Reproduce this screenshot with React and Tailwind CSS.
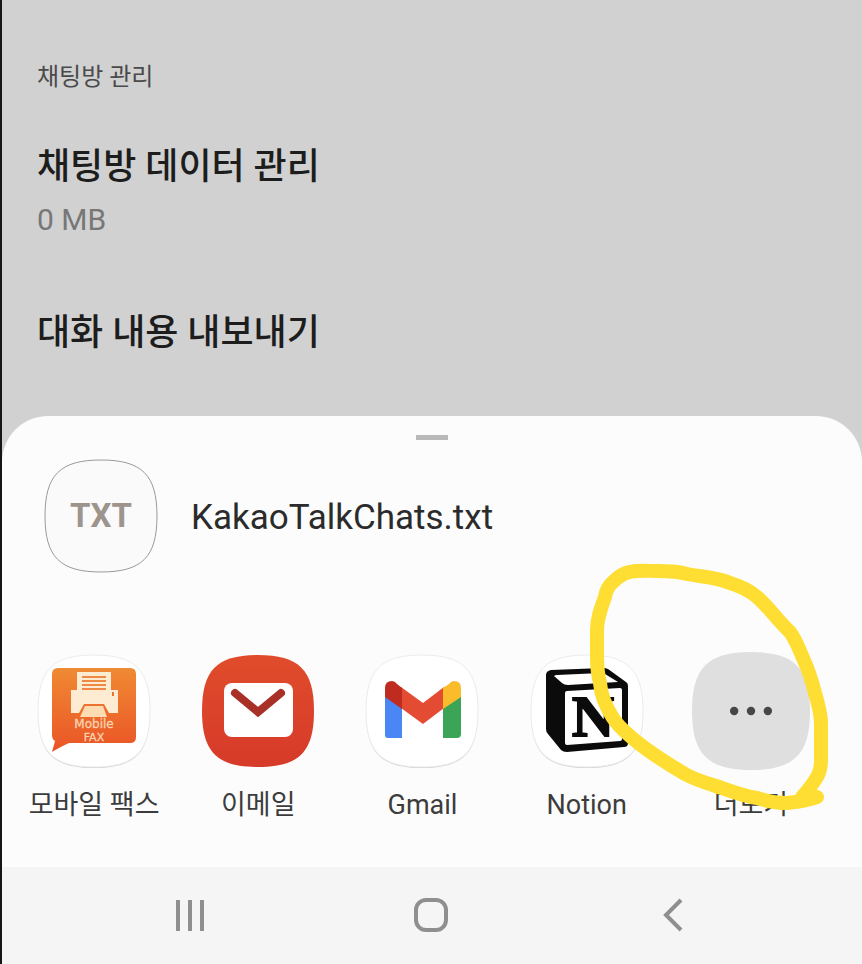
import React from "react";

const SQUIRCLE =
  "M56 0C15 0 0 15 0 56S15 112 56 112S112 97 112 56S97 0 56 0Z";

function Tile({ children }) {
  return (
    <svg viewBox="-2 -2 116 116" className="size-[116px]" aria-hidden="true">
      <path d={SQUIRCLE} fill="#d0d0d0" transform="translate(0 1)" />
      <path d={SQUIRCLE} fill="#fff" stroke="#ececec" strokeWidth="1" />
      {children}
    </svg>
  );
}

function FaxIcon() {
  return (
    <Tile>
      <defs>
        <linearGradient id="fax" x1="0" y1="0" x2="0" y2="1">
          <stop offset="0" stopColor="#f08a33" />
          <stop offset="1" stopColor="#ea5426" />
        </linearGradient>
      </defs>
      <path
        d="M20 13H92Q98 13 98 19V82Q98 88 92 88H31Q24 91 14 97L17 86Q14 84 14 81V19Q14 13 20 13Z"
        fill="url(#fax)"
      />
      <path d="M39 17H73V35H80V58H71L66 49H46L41 58H33V35H39Z" fill="#fdebd2" />
      <path d="M47 51H65L69 62H42Z" fill="#fddcb4" />
      <path d="M44 22H68M44 26H68M44 30H68M44 34H68" stroke="#ef8a45" strokeWidth="2" />
      <path d="M74 37H76V41H74Z" fill="#ec7030" />
      <g
        fill="#fbd3b0"
        stroke="#fbd3b0"
        strokeWidth="0.3"
        fontFamily="'DejaVu Sans', sans-serif"
        textAnchor="middle"
      >
        <text x="56" y="73" fontSize="12">Mobile</text>
        <text x="56" y="86" fontSize="11">FAX</text>
      </g>
    </Tile>
  );
}

function MailIcon() {
  return (
    <svg viewBox="-2 -2 116 116" className="size-[116px]" aria-hidden="true">
      <defs>
        <linearGradient id="mail" x1="0" y1="0" x2="0" y2="1">
          <stop offset="0" stopColor="#e04c2b" />
          <stop offset="1" stopColor="#d63a29" />
        </linearGradient>
      </defs>
      <path d={SQUIRCLE} fill="url(#mail)" />
      <rect x="22" y="28" width="69" height="54" rx="8" fill="#fff" />
      <path
        d="M33 38L56 57L79 38"
        fill="none"
        stroke="#a93026"
        strokeWidth="8"
        strokeLinecap="round"
      />
    </svg>
  );
}

function GmailIcon() {
  return (
    <Tile>
      <path d="M19 40L36 52V83H22Q19 83 19 80Z" fill="#4a86f4" />
      <path d="M95 40L77 52V83H91Q95 83 95 79Z" fill="#3ba457" />
      <path d="M35 32L57 48L78 32V53L57 69L35 53Z" fill="#e34b33" />
      <path d="M19 33Q19 26 26 26Q29 26 31 29L36 33V54L19 42Z" fill="#c02b20" />
      <path d="M95 33Q95 26 88 26Q85 26 83 29L77 33V54L95 42Z" fill="#fbbc2c" />
    </Tile>
  );
}

function NotionIcon() {
  return (
    <Tile>
      <path
        d="M20 15L72 13Q75 13 77 14L95 27Q97 28 97 31V88Q97 92 93 92L36 97Q32 97 30 95L17 79Q15 77 15 74V20Q15 16 20 15Z"
        fill="#0b0b0b"
      />
      <path d="M23 21Q24 20 26 20L70 18Q72 18 74 19L87 27L37 30Q33 30 31 28Z" fill="#fff" />
      <path d="M36 36L89 33Q91 33 91 35V84Q91 86 89 86L36 90Q34 90 34 88V38Q34 36 36 36Z" fill="#fff" />
      <text
        x="62"
        y="81"
        fontFamily="'Liberation Serif', serif"
        fontWeight="700"
        fontSize="58"
        textAnchor="middle"
        fill="#0b0b0b"
        stroke="#0b0b0b"
        strokeWidth="2"
      >
        N
      </text>
    </Tile>
  );
}

function MoreIcon() {
  return (
    <svg viewBox="0 0 112 112" className="size-[118px]" aria-hidden="true">
      <path d={SQUIRCLE} fill="#dfdfdf" />
      <g fill="#474747">
        <circle cx="40" cy="56" r="4" />
        <circle cx="56" cy="56" r="4" />
        <circle cx="72" cy="56" r="4" />
      </g>
    </svg>
  );
}

function HandDrawnCircle() {
  return (
    <svg
      viewBox="0 0 260 260"
      className="pointer-events-none absolute -top-[92px] left-1/2 -ml-[171px] h-[260px] w-[260px] max-w-none"
      aria-hidden="true"
    >
      <path
        d="M237 237C228 240 218 242 207 243C197 243 187 241 177 238C162 236 148 230 133 225C123 222 114 219 105 214C88 204 72 194 57 182C49 175 39 168 33 158C26 147 21 136 20 123C18 115 17 106 17 97V70C17 58 21 48 25 37C26 31 28 26 33 22C38 17 43 13 50 12C59 10 68 11 77 11C87 11 97 11 107 14C122 17 136 17 150 23C160 26 169 30 177 37C189 47 197 60 210 72C216 80 219 89 223 98C228 109 232 121 235 133C238 143 241 153 241 163V200C241 206 240 212 237 217C233 224 229 229 222 237"
        fill="none"
        stroke="#ffde33"
        strokeWidth="14"
        strokeLinecap="round"
        strokeLinejoin="round"
      />
    </svg>
  );
}

const apps = [
  { name: "모바일 팩스", Icon: FaxIcon },
  { name: "이메일", Icon: MailIcon },
  { name: "Gmail", Icon: GmailIcon },
  { name: "Notion", Icon: NotionIcon },
  { name: "더보기", Icon: MoreIcon, marked: true },
];

export default function App() {
  return (
    <div className="flex min-h-screen flex-col border-l-2 border-[#161616] bg-[#d1d1d1] font-[Roboto,'Noto_Sans_CJK_KR',sans-serif]">
      <main className="px-[35px] pt-[59px] pb-14">
        <h1 className="text-[24px] leading-9 text-[#4a4a4a]">채팅방 관리</h1>
        <button type="button" className="mt-[45px] block w-full text-left">
          <span className="block text-[36px] leading-[54px] font-medium text-[#1d1d1d]">
            채팅방 데이터 관리
          </span>
          <span className="mt-[6px] block text-[30px] leading-10 text-[#777]">0 MB</span>
        </button>
        <button
          type="button"
          className="mt-[66px] block w-full text-left text-[36px] leading-[54px] font-medium text-[#1d1d1d]"
        >
          대화 내용 내보내기
        </button>
      </main>

      <section
        aria-label="KakaoTalkChats.txt"
        className="flex-1 rounded-t-[46px] bg-[#fcfcfc] pt-[19px] pb-[42px]"
      >
        <div className="mx-auto h-[5px] w-8 bg-[#b9b9b9]" />
        <div className="mt-[19px] flex items-center gap-[33px] pl-[42px]">
          <div className="grid size-[114px] place-items-center">
            <svg viewBox="-1 -1 114 114" className="col-start-1 row-start-1 size-[114px]" aria-hidden="true">
              <path d={SQUIRCLE} fill="#fafafa" stroke="#9a9a9a" strokeWidth="1" />
            </svg>
            <span className="col-start-1 row-start-1 text-[33px] leading-10 font-bold text-[#9c948d]">
              TXT
            </span>
          </div>
          <h2 className="pt-1 text-[35px] leading-10 text-[#2b2b2b]">KakaoTalkChats.txt</h2>
        </div>

        <div className="mt-[79px] grid grid-cols-5 pr-[29px] pl-[10px]">
          {apps.map(({ name, Icon, marked }) => (
            <div key={name} className="relative">
              <button type="button" className="flex w-full flex-col items-center">
                <span className="flex h-[118px] items-center">
                  <Icon />
                </span>
                <span className="mt-[15px] text-[27px] leading-10 whitespace-nowrap text-[#3c3c3c]">
                  {name}
                </span>
              </button>
              {marked && <HandDrawnCircle />}
            </div>
          ))}
        </div>
      </section>

      <nav className="grid h-[97px] grid-cols-3 place-items-center bg-[#f5f5f5] px-[68px]">
        <button type="button" aria-label="최근 앱">
          <svg width="36" height="36" viewBox="0 0 36 36" stroke="#8f8f8f" strokeWidth="4" strokeLinecap="butt">
            <path d="M5 2V33M17 2V33M29 2V33" />
          </svg>
        </button>
        <button type="button" aria-label="홈">
          <svg width="36" height="36" viewBox="0 0 36 36" fill="none" stroke="#8f8f8f" strokeWidth="4">
            <rect x="2" y="2" width="30" height="30" rx="10" />
          </svg>
        </button>
        <button type="button" aria-label="뒤로">
          <svg width="36" height="36" viewBox="0 0 36 36" fill="none" stroke="#8f8f8f" strokeWidth="4">
            <path d="M26 2L11 17L26 32" />
          </svg>
        </button>
      </nav>
    </div>
  );
}
